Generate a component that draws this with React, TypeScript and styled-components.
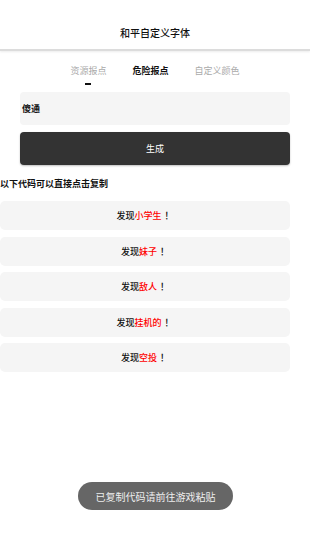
import React from "react";
import styled, { createGlobalStyle } from "styled-components";

const Global = createGlobalStyle`
  html, body { margin: 0; padding: 0; background: #fff; }
  body { font-family: "Noto Sans CJK SC", "Noto Sans", sans-serif; color: #111; }
  * { box-sizing: border-box; }
`;

const Page = styled.div`
  width: 310px;
  min-height: 552px;
  position: relative;
`;

const Header = styled.div`
  height: 51px;
  padding-top: 26px;
  text-align: center;
  font-size: 10px;
  line-height: 14px;
  font-weight: 500;
  border-bottom: 2px solid #dcdcdc;
  box-shadow: 0 1px 2px rgba(0, 0, 0, 0.08);
`;

const Tabs = styled.div`
  display: flex;
  justify-content: center;
  gap: 26px;
  padding-top: 13px;
  height: 41px;
`;

const Tab = styled.div<{ $active?: boolean }>`
  position: relative;
  font-size: 9px;
  line-height: 13px;
  color: ${(p) => (p.$active ? "#111" : "#aaa")};
  font-weight: ${(p) => (p.$active ? 700 : 400)};
`;

const Underline = styled.span`
  position: absolute;
  left: 50%;
  top: 19px;
  width: 6px;
  height: 2px;
  margin-left: -3px;
  background: #111;
`;

const Field = styled.div`
  margin: 0 20px;
  height: 33px;
  background: #f5f5f5;
  border-radius: 4px;
  display: flex;
  align-items: center;
  padding-left: 2px;
  font-size: 9px;
  font-weight: 700;
`;

const Button = styled.div`
  margin: 7px 20px 0;
  height: 33px;
  background: #333;
  border-radius: 4px;
  box-shadow: 0 1px 2px rgba(0, 0, 0, 0.25);
  color: #fff;
  font-size: 9px;
  display: flex;
  align-items: center;
  justify-content: center;
`;

const Caption = styled.div`
  margin-top: 13px;
  font-size: 9px;
  line-height: 12px;
  font-weight: 700;
`;

const List = styled.div`
  margin-top: 11px;
  width: 290px;
  display: flex;
  flex-direction: column;
  gap: 6.5px;
`;

const Item = styled.div`
  height: 29px;
  background: #f5f5f5;
  border-radius: 5px;
  display: flex;
  align-items: center;
  justify-content: center;
  font-size: 9px;
  font-weight: 500;
`;

const Red = styled.span`
  color: #f00;
`;

const Bang = styled.span`
  margin-left: 3px;
`;

const Toast = styled.div`
  position: absolute;
  left: 78px;
  top: 482px;
  width: 155px;
  height: 28px;
  border-radius: 14px;
  background: #666;
  color: #eee;
  font-size: 10px;
  display: flex;
  align-items: center;
  justify-content: center;
`;

const items = ["小学生", "妹子", "敌人", "挂机的", "空投"];

export default function App() {
  return (
    <Page>
      <Global />
      <Header>和平自定义字体</Header>
      <Tabs>
        <Tab>
          资源报点
          <Underline />
        </Tab>
        <Tab $active>危险报点</Tab>
        <Tab>自定义颜色</Tab>
      </Tabs>
      <Field>傻通</Field>
      <Button>生成</Button>
      <Caption>以下代码可以直接点击复制</Caption>
      <List>
        {items.map((t) => (
          <Item key={t}>
            发现<Red>{t}</Red>
            <Bang>！</Bang>
          </Item>
        ))}
      </List>
      <Toast>已复制代码请前往游戏粘贴</Toast>
    </Page>
  );
}
